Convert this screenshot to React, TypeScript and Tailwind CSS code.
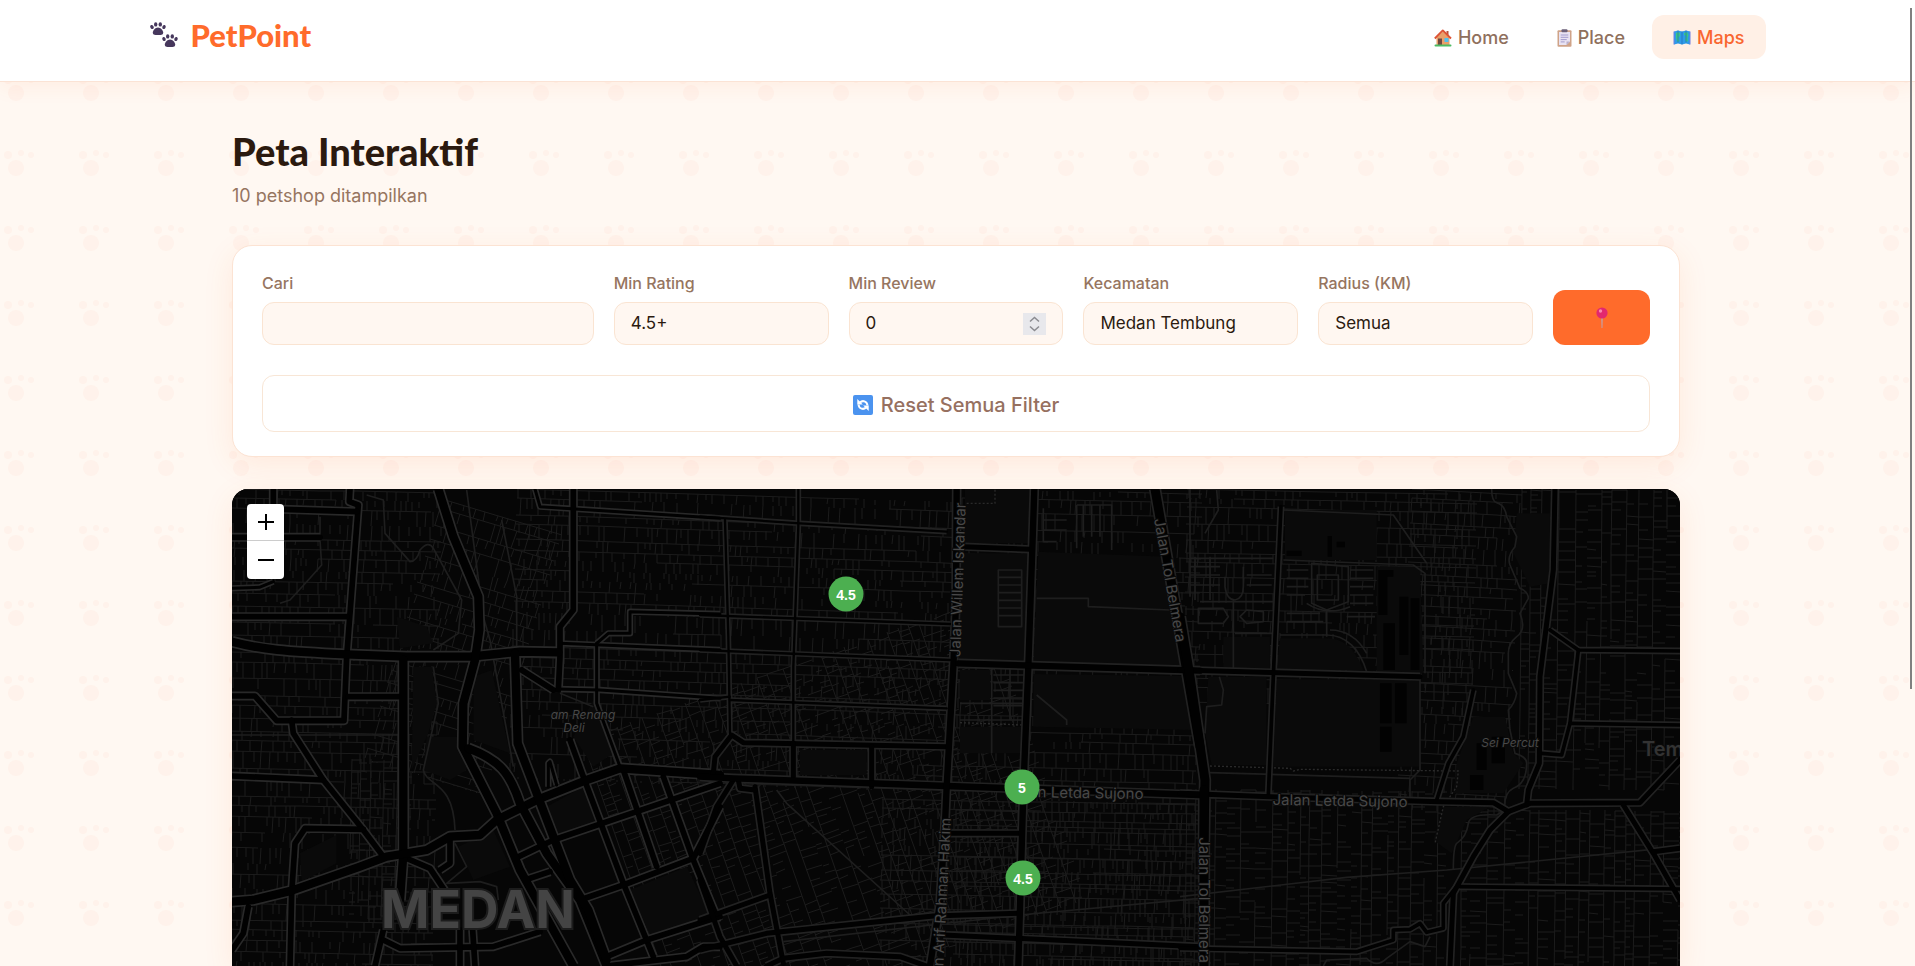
import type { ReactNode } from "react";

type Road = { d: string; w: number };

const road = (w: number, paths: string[]): Road[] => paths.map((d) => ({ d, w }));

// Each sector is drawn at 3x and scaled down when placed on the map.
const sectors = [
  {
    transform: "translate(-12 -19) scale(0.33333)",
    roads: [
      ...road(14, [
        "M945 57 L960 110 L1500 145",
        "M1130 520 V700 L1200 890",
        "M1130 520 L1165 490 H1230 V425 L1500 432",
        "M1020 520 L1500 540",
        "M1010 657 L1140 660 L1500 685",
        "M985 950 V880 L990 875 L1010 945",
        "M36 355 L118 352 L160 335",
      ]),
      ...road(22, [
        "M390 57 L388 95 L415 105 L380 560 L372 752 L170 752 L105 678 L36 678",
        "M190 118 L410 125",
        "M160 57 V110",
        "M36 202 L300 202",
        "M36 440 L380 440",
        "M385 680 H545",
        "M36 918 L310 930",
        "M215 750 L220 790 L310 930 L430 1080 L490 1160",
        "M430 1078 L255 1075 L225 1120 L215 1270 L210 1488",
        "M905 600 L1000 660",
        "M1060 57 V420 L1020 470 V560 L1015 660",
        "M1050 810 L1090 920 L1150 1080 L1210 1240 L1300 1460",
        "M1330 920 L1420 1170 L1490 1340",
        "M1210 900 L1310 1190",
        "M885 1165 L1000 1110 L1250 1025 L1500 940",
        "M1080 1290 L1210 1245 L1420 1165 L1500 1010",
        "M1160 1460 L1280 1410 L1500 1340",
        "M1160 1488 L1400 1460 L1450 1430 H1500",
        "M85 1310 L70 1390 L36 1440",
        "M490 1380 L465 1488",
        "M490 1410 L540 1435 L820 1430 L960 1385",
        "M720 1380 V1488 M758 1380 L765 1488",
        "M690 1105 V1180 L660 1200",
        "M560 1165 L630 1195 L680 1270",
        "M915 1230 L990 1205",
      ]),
      ...road(30, [
        "M36 515 C120 538 200 545 380 553 L560 560 L750 560 L830 552 L900 545 L1015 547",
        "M655 57 L700 200 L775 380 L778 480 L765 570 L730 700 L728 830 L830 1030 L900 1200 L1060 1488",
        "M550 570 V1150 L540 1290",
        "M36 1295 L100 1290 L215 1262 L420 1190 L500 1160 L620 1140 L690 1100 L780 1095 L830 1050 L950 990 L1100 930 L1200 895 L1500 915",
        "M745 835 C840 870 870 910 900 1000 L980 1150 L1080 1290 L1160 1488",
        "M885 550 L893 820 L950 970 L1050 1230 L1105 1320 L1160 1470",
      ]),
    ],
    lines: [
      "M440 75 L490 90 L495 190 L570 275 Q590 275 600 240 Q625 210 640 235 L725 390 L715 490 L640 540",
      "M640 590 L655 700 L610 900 C620 950 700 930 705 1080",
      "M705 1120 L740 1190 L680 1240 L780 1235 L830 1250 L835 1290",
      "M300 140 V210 L305 285 L265 330 L210 390 L180 400",
      "M36 795 H540 M740 60 L790 440 L810 510 L880 890",
      "M845 150 L890 380 V540 M1020 670 L1120 710",
    ],
    parks: [
      "M580 590 H635 L650 700 L625 790 L575 900Z",
      "M620 800 H720 L740 900 L690 930 L610 900Z",
      "M240 1150 L350 1095 V1180 L245 1235Z",
      "M715 1130 L820 1080 L870 1190 L760 1230Z",
      "M980 1010 L1090 950 L1130 1065 L1020 1100Z",
      "M1120 690 L1180 850 L1120 890 L1060 800Z",
      "M1230 1260 L1400 1190 L1470 1335 L1290 1395Z",
      "M530 440 L620 470 L640 520 L540 535Z",
      "M760 620 L815 600 L870 850 L760 810Z",
    ],
    dots: "",
  },
  {
    transform: "translate(468 -19) scale(0.33333)",
    roads: [
      ...road(12, [
        "M75 150 L85 500 L90 790",
        "M0 140 L300 160 L740 185",
        "M295 57 V170 L280 590 V820",
        "M0 540 L750 570",
        "M0 435 L750 462",
        "M90 690 L740 715",
        "M0 690 L90 680",
      ]),
      ...road(20, [
        "M40 910 L45 860 L95 795 L130 818 L740 830",
        "M280 820 V920 M515 830 V950",
        "M790 230 L990 238",
        "M100 930 L50 1010 L0 1150",
        "M165 950 L210 1270 L250 1480",
        "M0 1350 L210 1275",
        "M0 1230 L60 1400 L110 1488",
        "M0 1440 L200 1390 L700 1338 L955 1330",
        "M740 1090 H960",
        "M730 1395 L1500 1430",
        "M200 1488 L250 1465 L380 1450 L600 1460 L680 1488",
        "M115 930 L120 955 L165 960",
      ]),
      ...road(24, [
        "M1003 57 L985 590 L970 960 L955 1488",
        "M0 920 L100 925 L740 948 L1500 975",
        "M770 57 L768 400 L760 590 L740 950 L735 1060 L720 1300 L690 1488",
        "M775 580 L1500 602",
      ]),
      ...road(32, ["M1365 57 L1460 600 L1500 830"]),
    ],
    lines: [
      "M230 960 L260 1000 L630 1335",
      "M250 1415 L960 1335 L1500 1285",
      "M1010 675 L1100 750 V765",
      "M895 300 H965 V470 H895Z M895 322 H965 M895 345 H965 M895 368 H965 M895 391 H965 M895 414 H965 M895 437 H965",
      "M875 590 V850 M930 590 V750 M880 615 H980 M880 638 H980 M880 661 H980 M880 684 H980 M880 707 H980 M780 700 H980 M780 750 H980",
      "M1030 115 V215 H1070 M1130 105 V235 M1130 105 H1235 V240 M1030 150 H1100 M1030 180 H1100 M1150 105 V200 M1175 105 V200 M1200 105 V200",
      "M1010 385 H1165 V410 L1410 420",
    ],
    parks: [
      "M795 57 H990 V220 H795Z",
      "M785 250 H985 V572 H775Z",
      "M1015 245 L1405 260 L1440 590 L1000 580Z",
      "M1000 612 L1455 618 L1480 780 L1000 770Z",
      "M780 770 H965 V850 H780Z",
      "M780 600 H870 V690 H780Z",
      "M300 840 H500 V915 H300Z",
    ],
    dots: "M800 100 H885 V57 M780 758 L970 765",
  },
  {
    transform: "translate(948 -19) scale(0.33333)",
    roads: [
      ...road(16, [
        "M1110 480 L1195 540 L1500 543",
        "M1195 540 L1170 760 L1145 855 L1085 850",
        "M1170 760 L1500 765",
        "M880 660 L850 800 L805 880 L770 990",
        "M840 1250 L1500 1257",
        "M0 1435 L530 1445 L640 1410 V1380 L690 1378 L720 1360 L740 1387 L790 1375 V1300 L830 1250",
        "M303 110 L285 500 L265 975",
      ]),
      ...road(20, [
        "M0 600 L720 620",
        "M1125 57 L1120 300 L1080 620 L1078 880 L1045 960 L1040 1005",
        "M0 970 L270 980 L780 995 L940 998 L985 1025 L1050 1000 L1380 998 L1500 870",
        "M985 1025 L930 1080 L880 1160 L820 1270 L810 1488",
        "M1330 1005 L1420 1150 L1500 1290",
        "M1420 1145 L1500 1135",
      ]),
      ...road(32, ["M0 440 L30 620 L75 930 L72 1110", "M72 960 V1488"]),
    ],
    lines: [
      "M935 57 Q935 95 950 98 Q975 105 980 140 L1010 200 L1005 230 Q980 260 990 285 L1020 355 Q1045 365 1045 385 L1020 430 Q1040 480 1010 500 Q985 520 985 550 V610 L1010 670 Q1005 700 985 720 L990 780 L1005 850 Q1040 860 1040 880 Q1040 940 1000 955 Q970 970 975 1020 L950 1035 Q870 1030 865 1060 Q860 1100 830 1120 Q820 1130 820 1200",
      "M0 1280 L500 1222 L800 1200 L1500 1130",
      "M430 1488 L440 1470 L560 1465 Q590 1495 620 1465 L690 1415 L735 1430 L750 1400",
      "M310 120 L640 135 L740 280 M310 270 L700 285 L735 310 V610",
      "M395 280 V400 L440 420 L505 395 V290 Z M412 315 H475 V390 H412Z M440 420 V500",
      "M300 495 H440 C500 495 540 540 560 605",
      "M380 400 Q440 440 510 410 M450 480 Q520 480 560 550",
      "M320 300 H385 M320 325 H385 M320 350 H385 M320 375 H375 M320 430 H420 M320 455 H430 M510 300 H580 M510 325 H580 M510 350 H580 M510 375 H580 M510 400 H580 M500 440 H585",
      "M30 265 H280 M30 290 H120 M30 315 H120 M30 345 H120 M200 315 H275 M200 345 H275 M60 395 H280 M45 260 V390 M90 260 V390",
      "M135 320 V350 Q140 390 165 390 Q190 385 190 350 V290 M160 390 V600 M165 490 H290",
      "M55 415 H130 L145 440 L130 460 H55Z M180 440 L200 420 L250 425 V455 L200 460Z",
      "M118 620 L130 660 L125 705 L80 710 L75 790 M720 620 V900 L690 930 V980",
      "M90 908 L690 925 M30 57 V380 M110 60 L115 120 L75 190",
    ],
    parks: [
      "M315 120 H590 V270 H315Z",
      "M300 505 H440 C500 505 530 550 550 600 H290Z",
      "M130 500 H270 V595 H130Z",
      "M85 620 H260 V885 H95 L75 790Z",
      "M290 628 H720 V890 H280Z",
      "M590 290 H720 L730 610 H590Z",
      "M880 740 H975 L1000 850 L1030 880 L970 970 L820 970 L830 880Z",
      "M1010 130 L1110 130 V340 L1050 350 L1000 250Z",
      "M790 1010 H930 L860 1050 L815 1150 L760 1110Z",
    ],
    dots: "M90 888 L330 895 L340 903 L360 898 L835 903 L830 950 L790 1010 L765 1120",
  },
];

const sheds = [
  "M595 300 H640 V320 H622 V435 H595Z",
  "M658 380 H685 V555 H658Z M692 385 H718 V600 H692Z",
  "M610 460 H645 V600 H610Z M600 640 H635 V760 H600Z M645 640 H680 V760 H645Z M600 770 H635 V845 H600Z",
  "M320 242 H365 V258 H320Z M443 198 H456 V260 H443Z M470 215 H495 V232 H470Z",
  "M890 820 H920 V900 H890Z M935 800 H975 V880 H935Z M870 915 H910 V960 H870Z",
];

// Small residential streets: lanes per block with alleys branching off them.
function buildStreets(x: number, y: number, w: number, h: number, seed: number, tilt: number, vertical: boolean) {
  let s = seed;
  const rnd = () => {
    s = (s * 16807) % 2147483647;
    return s / 2147483647;
  };
  const out: string[] = [];
  const long = vertical ? h : w;
  const short = vertical ? w : h;
  const put = (a: number, b: number, c: number, d: number) => {
    const p = (u: number, v: number) => {
      const px = vertical ? x + v : x + u;
      const py = vertical ? y + u : y + v;
      return `${Math.round(px - (py - y) * tilt)} ${Math.round(py + (px - x) * tilt)}`;
    };
    out.push(`M${p(a, b)} L${p(c, d)}`);
  };
  let v = 0;
  while (v < short) {
    const step = 9 + Math.floor(rnd() * 9);
    let u = 0;
    while (u < long) {
      const len = 30 + rnd() * 130;
      if (rnd() > 0.2) put(u, v, Math.min(u + len, long), v);
      u += len;
    }
    u = rnd() * 5;
    while (u < long) {
      const reach = rnd() > 0.4 ? step : step * 0.6;
      if (rnd() > 0.25) put(u, v, u, Math.min(v + reach, short));
      u += 4 + rnd() * 9;
    }
    v += step;
  }
  return out.join(" ");
}

const streets = [
  buildStreets(0, 0, 210, 480, 11, 0.02, false),
  buildStreets(120, 270, 60, 160, 19, 0.02, true),
  buildStreets(210, 10, 120, 260, 23, 0.3, false),
  buildStreets(285, 0, 450, 290, 37, 0.03, false),
  buildStreets(350, 250, 400, 300, 41, -0.35, true),
  buildStreets(730, 0, 240, 480, 53, 0.02, false),
  buildStreets(650, 310, 320, 180, 59, 0.02, false),
  buildStreets(955, 0, 290, 220, 67, 0.02, false),
  buildStreets(955, 300, 260, 180, 71, 0.01, true),
  buildStreets(1180, 0, 110, 320, 83, 0.05, false),
  buildStreets(1290, 0, 160, 300, 97, 0.01, true),
  buildStreets(1230, 320, 230, 170, 101, 0.01, true),
];

function CityMap() {
  return (
    <svg className="block h-full w-full" aria-hidden="true">
      <rect width="100%" height="100%" fill="#060606" />
      {streets.map((d, i) => (
        <path key={i} d={d} fill="none" stroke="#1c1c1c" strokeWidth="1" />
      ))}
      {sectors.map((s, i) => (
        <g key={i} transform={s.transform} fill="none" strokeLinejoin="round">
          {s.parks.map((d) => <path key={d} d={d} fill="#0a0a0a" />)}
          {s.lines.map((d) => <path key={d} d={d} stroke="#1e1e1e" strokeWidth="5" />)}
          <path d={s.dots} stroke="#2a2a2a" strokeWidth="4" strokeDasharray="6 6" />
          {i === 2 && sheds.map((d) => <path key={d} d={d} fill="#020202" />)}
        </g>
      ))}
      {sectors.map((s, i) => (
        <g key={i} transform={s.transform} fill="none" strokeLinejoin="round" stroke={i === 0 ? "#292929" : "#222222"}>
          {s.roads.map((r) => <path key={r.d} d={r.d} strokeWidth={r.w + 5} />)}
        </g>
      ))}
      {sectors.map((s, i) => (
        <g key={i} transform={s.transform} fill="none" strokeLinejoin="round" strokeLinecap="round" stroke="#010101">
          {s.roads.map((r) => <path key={r.d} d={r.d} strokeWidth={r.w - 5} />)}
        </g>
      ))}
      <g fontFamily="Inter, sans-serif" fill="#484848" stroke="#0a0a0a" strokeWidth="2" paintOrder="stroke" textAnchor="middle" fontSize="15">
        <text x="246" y="439" fontSize="52" fontWeight="700" fill="#444444" stroke="#1c1c1c" strokeWidth="4">MEDAN</text>
        <text x="351" y="230" fontSize="12" fontStyle="italic">am Renang</text>
        <text x="342" y="243" fontSize="12" fontStyle="italic">Deli</text>
        <text x="1278" y="258" fontSize="12" fontStyle="italic">Sei Percut</text>
        <text x="1410" y="267" fontSize="20" fontWeight="600" textAnchor="start" fill="#333333">Tem</text>
        <text transform="translate(731 91) rotate(-88)">Jalan Willem Iskandar</text>
        <text transform="translate(933 92) rotate(80)">Jalan Tol Belmera</text>
        <text transform="translate(967 411) rotate(90)">Jalan Tol Belmera</text>
        <text transform="translate(844 309) rotate(1)">Jalan Letda Sujono</text>
        <text transform="translate(1108 317) rotate(1)">Jalan Letda Sujono</text>
        <text transform="translate(719 329) rotate(-87)" textAnchor="end">n Arif Rahman Hakim</text>
      </g>
    </svg>
  );
}

function PawPattern() {
  return (
    <svg className="absolute inset-0 h-full w-full" aria-hidden="true">
      <defs>
        <pattern id="paws" width="75" height="75" patternUnits="userSpaceOnUse">
          <g fill="#ff6b2b" fillOpacity="0.04">
            <circle cx="16" cy="18" r="8" />
            <circle cx="8" cy="5" r="4" />
            <circle cx="21" cy="3" r="3" />
            <circle cx="31" cy="5" r="3" />
          </g>
        </pattern>
      </defs>
      <rect width="100%" height="100%" fill="url(#paws)" />
    </svg>
  );
}

function Paw({ x, y }: { x: number; y: number }) {
  return (
    <g transform={`translate(${x} ${y})`}>
      <ellipse cx="2" cy="5" rx="1.7" ry="2.1" transform="rotate(-20 2 5)" />
      <ellipse cx="5.7" cy="2.4" rx="1.7" ry="2.2" />
      <ellipse cx="10.3" cy="2.4" rx="1.7" ry="2.2" />
      <ellipse cx="14" cy="5" rx="1.7" ry="2.1" transform="rotate(20 14 5)" />
      <path d="M8 5.600c-2.700 0-5.200 3-5.200 5.200 0 1.700 1.300 2.200 2.700 2.200h5c1.400 0 2.700-.5 2.700-2.200C13.200 8.600 10.700 5.600 8 5.600z" />
    </g>
  );
}

function PawLogo() {
  return (
    <svg width="29" height="26" viewBox="0 0 29 26" fill="#46375c" aria-hidden="true">
      <Paw x={0} y={0} />
      <Paw x={12} y={12} />
    </svg>
  );
}

function HouseIcon() {
  return (
    <svg width="18" height="18" viewBox="0 0 18 18" aria-hidden="true">
      <path d="M12.5 2h2v4h-2z" fill="#b5533c" />
      <path d="M2.5 8.500 9 2.500l6.500 6V16h-13z" fill="#e9a06a" />
      <path d="M0.800 9.500 8.800 1.400l8.200 8.100" fill="none" stroke="#dd5335" strokeWidth="1.9" strokeLinejoin="round" />
      <rect x="4" y="9.5" width="4" height="6.5" fill="#70473e" />
      <rect x="10.5" y="9" width="4" height="4" fill="#4fc0ee" />
      <rect x="0.5" y="15.5" width="17" height="2" rx="1" fill="#4cbb63" />
    </svg>
  );
}

function ClipboardIcon() {
  return (
    <svg width="15" height="18" viewBox="0 0 15 18" aria-hidden="true">
      <rect x="0.5" y="1.2" width="14" height="16.5" rx="1" fill="#cfa388" />
      <path d="M2 3h11v9.500L9.500 16H2z" fill="#e8e2f2" />
      <path d="M13 12.500 9.500 16v-3.500z" fill="#b9adca" />
      <rect x="4.5" y="0.3" width="6" height="3" rx="1" fill="#6b6078" />
      <path d="M3.700 6h7.600M3.700 8.300h7.600M3.700 10.600h6M3.700 12.900h4" stroke="#9a93c8" strokeWidth="0.9" />
    </svg>
  );
}

function MapIcon() {
  return (
    <svg width="18" height="16" viewBox="0 0 18 16" aria-hidden="true">
      <path d="M1 1.500 5 .5l4 1 4-1 4 1v13l-4-1-4 1-4-1-4 1z" fill="#2d9be8" />
      <path d="M3 3 6 2l1.500 3-2 3 1 3-2 1-1.500-4zM11 3l3-1 1.500 3-1 3 .5 3-2 1-1-3 1-3-2-1z" fill="#3bc785" />
      <path d="M9 1.500v13M5 .5v12M13 .5v12" stroke="#2368b8" strokeWidth="0.7" />
      <path d="M1 14.500v-13M17 14.500v-13" stroke="#6f7fe0" strokeWidth="1" />
    </svg>
  );
}

function PinIcon() {
  return (
    <svg width="14" height="22" viewBox="0 0 14 22" aria-hidden="true">
      <path d="M6.300 10h1.400l-.3 11h-.8z" fill="#b9a7b8" />
      <circle cx="7" cy="6" r="5.6" fill="#e2286e" />
      <circle cx="5.5" cy="4" r="1.7" fill="#fa86ae" />
    </svg>
  );
}

function RefreshIcon() {
  return (
    <svg width="20" height="20" viewBox="0 0 20 20" aria-hidden="true">
      <rect width="20" height="20" rx="2" fill="#4b93ef" />
      <path d="M7 7.500c2.500-2.500 7-1.500 7.500 3M13 12.500c-2.500 2.500-7 1.500-7.500-3" fill="none" stroke="#fff" strokeWidth="2" />
      <path d="M4.300 4v5.500h5.500zM15.700 16v-5.500h-5.500z" fill="#fff" />
    </svg>
  );
}

const links = [
  { label: "Home", icon: <HouseIcon />, active: false },
  { label: "Place", icon: <ClipboardIcon />, active: false },
  { label: "Maps", icon: <MapIcon />, active: true },
];

const markers = [
  { rating: "4.5", left: 614, top: 105 },
  { rating: "5", left: 790, top: 298 },
  { rating: "4.5", left: 791, top: 389 },
];

const fieldClass =
  "h-[43px] w-full appearance-none rounded-xl border border-[#fae4d2] bg-[#fff7f1] px-4 text-[17px] text-[#2b1a0f] outline-none";

function Field({ id, label, children }: { id: string; label: string; children: ReactNode }) {
  return (
    <div className="flex min-w-0 flex-col gap-[9px]">
      <label htmlFor={id} className="text-base leading-5 font-medium text-[#967560]">{label}</label>
      {children}
    </div>
  );
}

export default function App() {
  return (
    <div className="relative flex h-screen flex-col overflow-hidden bg-[#fff8f2] font-['Inter',sans-serif] text-[#2b1a0f]">
      <PawPattern />

      <header className="relative border-b border-[#fbe3d5] bg-white shadow-[0_4px_20px_rgba(255,107,43,0.08)]">
        <div className="mx-auto flex h-[81px] max-w-[1680px] items-start justify-between px-8 pt-[15px]">
          <a href="#" className="flex h-10 items-center gap-3 font-['Lato',sans-serif] text-[31px] leading-none font-black text-[#ff6b2b]">
            <PawLogo />
            PetPoint
          </a>
          <nav className="flex gap-1.5">
            {links.map((l) => (
              <a
                key={l.label}
                href="#"
                className={`flex h-11 items-center gap-1.5 rounded-xl px-[21px] pt-0.5 text-lg font-medium ${
                  l.active ? "bg-[#fff0e6] text-[#f9662f]" : "text-[#8f705d]"
                }`}
              >
                {l.icon}
                {l.label}
              </a>
            ))}
          </nav>
        </div>
      </header>

      <div className="relative flex min-h-0 flex-1 flex-col pr-[3px]">
        <main className="mx-auto flex min-h-0 w-full max-w-[1512px] flex-1 flex-col px-8 pt-[46px]">
          <h1 className="font-['Lato',sans-serif] text-[38px] leading-[46px] font-black">Peta Interaktif</h1>
          <p className="mt-2 text-lg leading-7 text-[#967560]">10 petshop ditampilkan</p>

          <section className="mt-[35px] rounded-[20px] border border-[#fce3d3] bg-white px-[29px] pt-[27px] pb-6 shadow-[0_8px_30px_rgba(255,107,43,0.1)]">
            <div className="grid grid-cols-[332fr_215fr_215fr_215fr_215fr_97fr] items-end gap-5">
              <Field id="search" label="Cari">
                <input id="search" type="text" className={fieldClass} />
              </Field>
              <Field id="rating" label="Min Rating">
                <select id="rating" className={fieldClass}>
                  <option>4.5+</option>
                </select>
              </Field>
              <Field id="review" label="Min Review">
                <div className="flex h-[43px] items-center rounded-xl border border-[#fae4d2] bg-[#fff7f1] px-4">
                  <input
                    id="review"
                    type="number"
                    defaultValue={0}
                    className="min-w-0 flex-1 appearance-none bg-transparent text-[17px] text-[#2b1a0f] outline-none [&::-webkit-inner-spin-button]:appearance-none"
                  />
                  <span className="flex h-[22px] w-[23px] items-center justify-center bg-[#e8e8ec]">
                    <svg width="11" height="16" viewBox="0 0 11 16" fill="none" stroke="#8b8b90" strokeWidth="1.5" aria-hidden="true">
                      <path d="M1 5.500 5.500 1.500 10 5.500M1 10.500l4.500 4 4.500-4" />
                    </svg>
                  </span>
                </div>
              </Field>
              <Field id="district" label="Kecamatan">
                <select id="district" className={fieldClass}>
                  <option>Medan Tembung</option>
                </select>
              </Field>
              <Field id="radius" label="Radius (KM)">
                <select id="radius" className={fieldClass}>
                  <option>Semua</option>
                </select>
              </Field>
              <button type="button" aria-label="Lokasi saya" className="flex h-[55px] items-center justify-center rounded-xl bg-[#ff6b2b]">
                <PinIcon />
              </button>
            </div>
            <button
              type="button"
              className="mt-[30px] flex h-[57px] w-full items-center justify-center gap-2 rounded-xl border border-[#f8e6d6] pt-0.5 text-xl font-medium text-[#967060]"
            >
              <RefreshIcon />
              Reset Semua Filter
            </button>
          </section>

          <section className="relative mt-8 min-h-0 flex-1 overflow-hidden rounded-t-2xl bg-black shadow-[0_8px_30px_rgba(255,107,43,0.1)]">
            <CityMap />
            <div className="absolute top-[15px] left-[15px] flex w-[37px] flex-col overflow-hidden rounded-sm bg-white">
              <button type="button" aria-label="Zoom in" className="flex h-[37px] items-center justify-center border-b border-[#cccccc]">
                <svg width="16" height="16" viewBox="0 0 16 16" stroke="#000" strokeWidth="2"><path d="M0 8h16M8 0v16" /></svg>
              </button>
              <button type="button" aria-label="Zoom out" className="flex h-[38px] items-center justify-center">
                <svg width="16" height="16" viewBox="0 0 16 16" stroke="#000" strokeWidth="2"><path d="M0 8h16" /></svg>
              </button>
            </div>
            {markers.map((m) => (
              <button
                key={m.top}
                type="button"
                className="absolute flex size-[35px] -translate-x-1/2 -translate-y-1/2 items-center justify-center rounded-full bg-[#4caf50] font-['Liberation_Sans',sans-serif] text-sm font-bold text-white"
                style={{ left: m.left, top: m.top }}
              >
                {m.rating}
              </button>
            ))}
          </section>
        </main>
      </div>

      <div className="absolute top-2 right-[3px] h-[681px] w-0.5 bg-[#808080]" />
    </div>
  );
}
